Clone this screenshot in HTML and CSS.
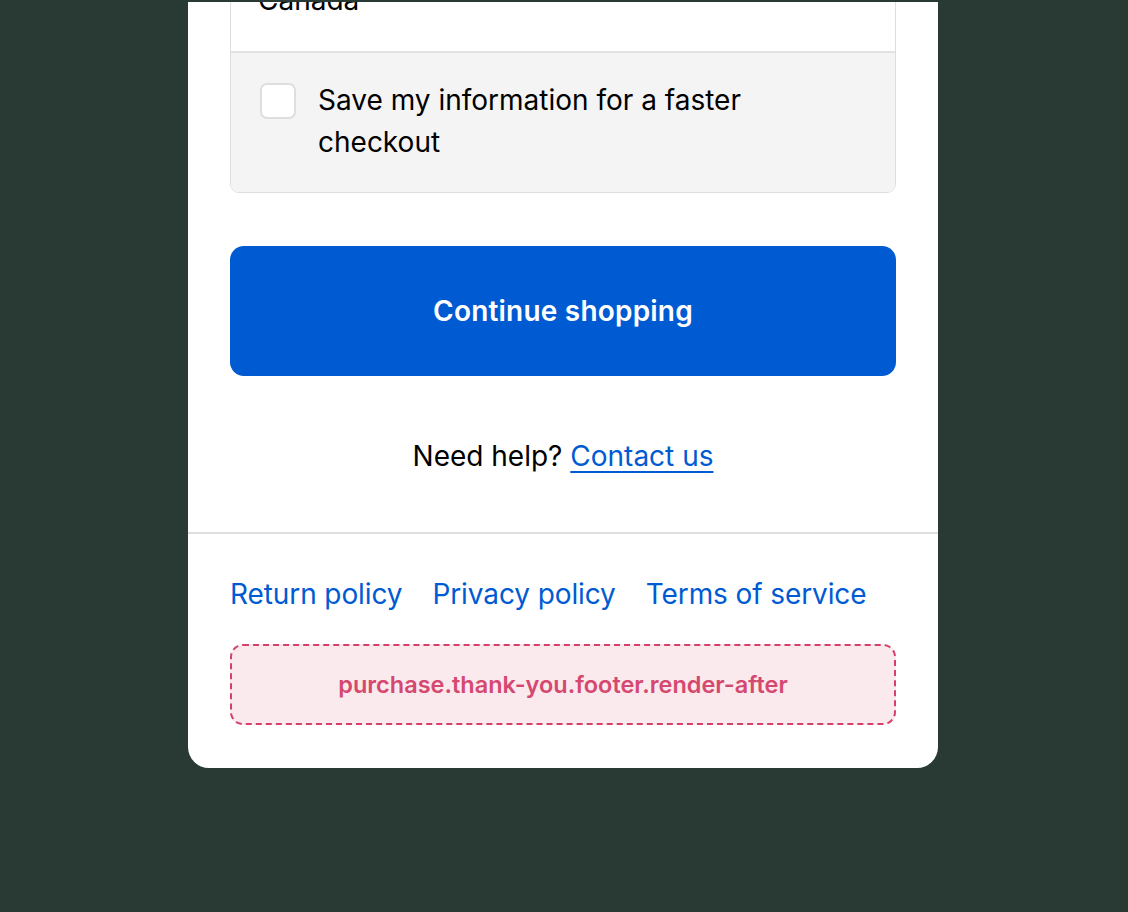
FILE: index.html
```html
<!DOCTYPE html>
<html lang="en">
<head>
<meta charset="utf-8">
<title>Thank you</title>
<link rel="stylesheet" href="styles.css">
</head>
<body>
<main class="card">
  <section class="content">
    <div class="fieldset">
      <div class="field-row">
        <span class="field-value">Canada</span>
      </div>
      <label class="check-row">
        <span class="checkbox"></span>
        <span class="check-label">Save my information for a faster checkout</span>
      </label>
    </div>
    <button class="primary-btn" type="button">Continue shopping</button>
    <p class="help">Need help? <a href="#" class="link">Contact us</a></p>
  </section>
  <footer class="footer">
    <nav class="policies">
      <a href="#" class="policy">Return policy</a>
      <a href="#" class="policy">Privacy policy</a>
      <a href="#" class="policy">Terms of service</a>
    </nav>
    <div class="target">purchase.thank-you.footer.render-after</div>
  </footer>
</main>
</body>
</html>
```
FILE: styles.css
```css
* { box-sizing: border-box; }
html, body { margin: 0; padding: 0; }
body {
  background: #293a34;
  font-family: Inter, "Noto Sans", sans-serif;
  color: #000;
  padding-top: 2px;
  min-height: 912px;
}
.card {
  width: 750px;
  margin-left: 188px;
  background: #fff;
  border-radius: 0 0 21px 21px;
  overflow: hidden;
}
.content {
  padding: 0 42px 55px;
}
.fieldset {
  margin-top: -40px;
  border: 1px solid #dedede;
  border-radius: 9px;
  overflow: hidden;
}
.field-row {
  padding: 16px 27px 30px;
  background: #fff;
  border-bottom: 2px solid #e3e3e3;
}
.field-value {
  display: block;
  font-size: 28px;
  line-height: 42px;
}
.check-row {
  display: flex;
  align-items: flex-start;
  gap: 22px;
  background: #f4f4f4;
  padding: 26px 40px 29px 29px;
}
.checkbox {
  flex: none;
  width: 36px;
  height: 36px;
  margin-top: 4px;
  border: 2px solid #dedede;
  border-radius: 7px;
  background: #fff;
}
.check-label {
  font-size: 28px;
  line-height: 42px;
}
.primary-btn {
  display: block;
  width: 100%;
  height: 130px;
  margin-top: 53px;
  border: 0;
  border-radius: 14px;
  background: #005bd3;
  color: #fff;
  font-family: inherit;
  font-size: 28px;
  font-weight: 600;
  letter-spacing: 0.2px;
}
.help {
  margin: 59px 0 0;
  text-align: center;
  font-size: 28px;
  line-height: 42px;
}
.link {
  color: #005bd3;
  text-decoration: underline;
  text-decoration-thickness: 2px;
  text-underline-offset: 5px;
}
.footer {
  border-top: 2px solid #dedede;
  padding: 39px 42px 43px;
}
.policies {
  display: flex;
  gap: 30px;
  font-size: 28px;
  line-height: 42px;
}
.policy {
  color: #005bd3;
  text-decoration: none;
  letter-spacing: -0.1px;
}
.target {
  margin-top: 29px;
  height: 81px;
  border: 2px dashed #d4406a;
  border-radius: 13px;
  background: #fbeaed;
  color: #d5486f;
  font-size: 23.5px;
  font-weight: 600;
  display: flex;
  align-items: center;
  justify-content: center;
}
```
